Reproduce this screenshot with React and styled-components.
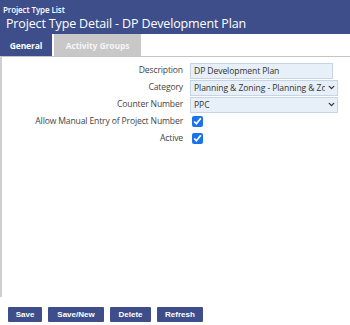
import { ChevronDown } from 'lucide-react'
import styled, { createGlobalStyle } from 'styled-components'

const GlobalStyle = createGlobalStyle`
	html, body {
		margin: 0;
		padding: 0;
		background: #fff;
	}
	body {
		font-family: 'Open Sans', 'Noto Sans', sans-serif;
		color: #333;
	}
`

const Page = styled.div`
	width: 350px;
	height: 325px;
	display: flex;
	flex-direction: column;
	overflow: hidden;
`

const Header = styled.div`
	background: #3d4e8a;
	color: #fff;
	padding: 5px 0 0 3px;
	box-sizing: border-box;
	height: 34px;
`

const Crumb = styled.div`
	font-size: 8px;
	font-weight: 600;
	line-height: 10px;
	letter-spacing: -0.1px;
`

const Title = styled.h1`
	margin: 0 0 0 3px;
	font-size: 12.5px;
	font-weight: 400;
	line-height: 17px;
	letter-spacing: -0.15px;
`

const Tabs = styled.div`
	display: flex;
	gap: 2px;
	height: 22px;
`

const Tab = styled.div`
	display: flex;
	align-items: center;
	justify-content: center;
	white-space: nowrap;
	font-size: 8.5px;
	font-weight: 700;
	letter-spacing: -0.1px;
	color: ${p => (p.$active ? '#fff' : '#f4f4f4')};
	background: ${p => (p.$active ? '#3d4e8a' : '#c8c8c8')};
	width: ${p => p.$w}px;
`

const Panel = styled.div`
	flex: 0 0 241px;
	border-top: 1px solid #c4c4c4;
	border-left: 2px solid #cfcfcf;
	padding-top: 5px;
	box-sizing: border-box;
`

const Form = styled.div`
	display: grid;
	grid-template-columns: 181px 148px;
	grid-auto-rows: 17px;
	column-gap: 7px;
	align-items: center;
`

const Label = styled.div`
	text-align: right;
	font-size: 8.6px;
	letter-spacing: -0.15px;
	color: #444;
	white-space: nowrap;
	line-height: 17px;
`

const FieldBox = styled.div`
	position: relative;
	height: 17px;
	display: flex;
	align-items: center;
`

const TextInput = styled.input`
	width: 143px;
	height: 16px;
	box-sizing: border-box;
	border: 1px solid #c6d4e4;
	background: #e7eff8;
	font-family: inherit;
	font-size: 8.6px;
	letter-spacing: -0.1px;
	color: #333;
	padding: 0 3px;
	outline: none;
`

const Select = styled.select`
	appearance: none;
	width: 148px;
	height: 16px;
	box-sizing: border-box;
	border: 1px solid #c6d4e4;
	background: #e7eff8;
	font-family: inherit;
	font-size: 8.6px;
	letter-spacing: -0.1px;
	color: #333;
	padding: 0 12px 0 3px;
	outline: none;
`

const Chevron = styled.span`
	position: absolute;
	right: 2px;
	top: 4px;
	width: 9px;
	height: 9px;
	display: flex;
	align-items: center;
	justify-content: center;
	background: #e7eff8;
	color: #333;
	pointer-events: none;
`

const Check = styled.input`
	margin: 0 0 0 2px;
	width: 11px;
	height: 11px;
	accent-color: #1a73e8;
`

const Footer = styled.div`
	display: flex;
	gap: 6px;
	padding: 10px 0 0 8px;
`

const Button = styled.button`
	height: 15px;
	padding: 0;
	width: ${p => p.$w}px;
	border: none;
	border-radius: 1px;
	background: #3d4e8a;
	color: #fff;
	font-family: 'Liberation Sans', Arial, sans-serif;
	font-size: 8px;
	font-weight: 700;
	line-height: 15px;
`

function SelectField({ value }) {
	return (
		<FieldBox>
			<Select defaultValue={value}>
				<option>{value}</option>
			</Select>
			<Chevron>
				<ChevronDown size={9} strokeWidth={3.5} />
			</Chevron>
		</FieldBox>
	)
}

export default function App() {
	return (
		<>
			<GlobalStyle />
			<Page>
				<Header>
					<Crumb>Project Type List</Crumb>
					<Title>Project Type Detail - DP Development Plan</Title>
				</Header>
				<Tabs>
					<Tab $active $w={52}>General</Tab>
					<Tab $w={87}>Activity Groups</Tab>
				</Tabs>
				<Panel>
					<Form>
						<Label>Description</Label>
						<FieldBox>
							<TextInput defaultValue="DP Development Plan" />
						</FieldBox>
						<Label>Category</Label>
						<SelectField value="Planning & Zoning - Planning & Zoning" />
						<Label>Counter Number</Label>
						<SelectField value="PPC" />
						<Label>Allow Manual Entry of Project Number</Label>
						<FieldBox>
							<Check type="checkbox" defaultChecked />
						</FieldBox>
						<Label>Active</Label>
						<FieldBox>
							<Check type="checkbox" defaultChecked />
						</FieldBox>
					</Form>
				</Panel>
				<Footer>
					<Button $w={34}>Save</Button>
					<Button $w={56}>Save/New</Button>
					<Button $w={41}>Delete</Button>
					<Button $w={46}>Refresh</Button>
				</Footer>
			</Page>
		</>
	)
}
